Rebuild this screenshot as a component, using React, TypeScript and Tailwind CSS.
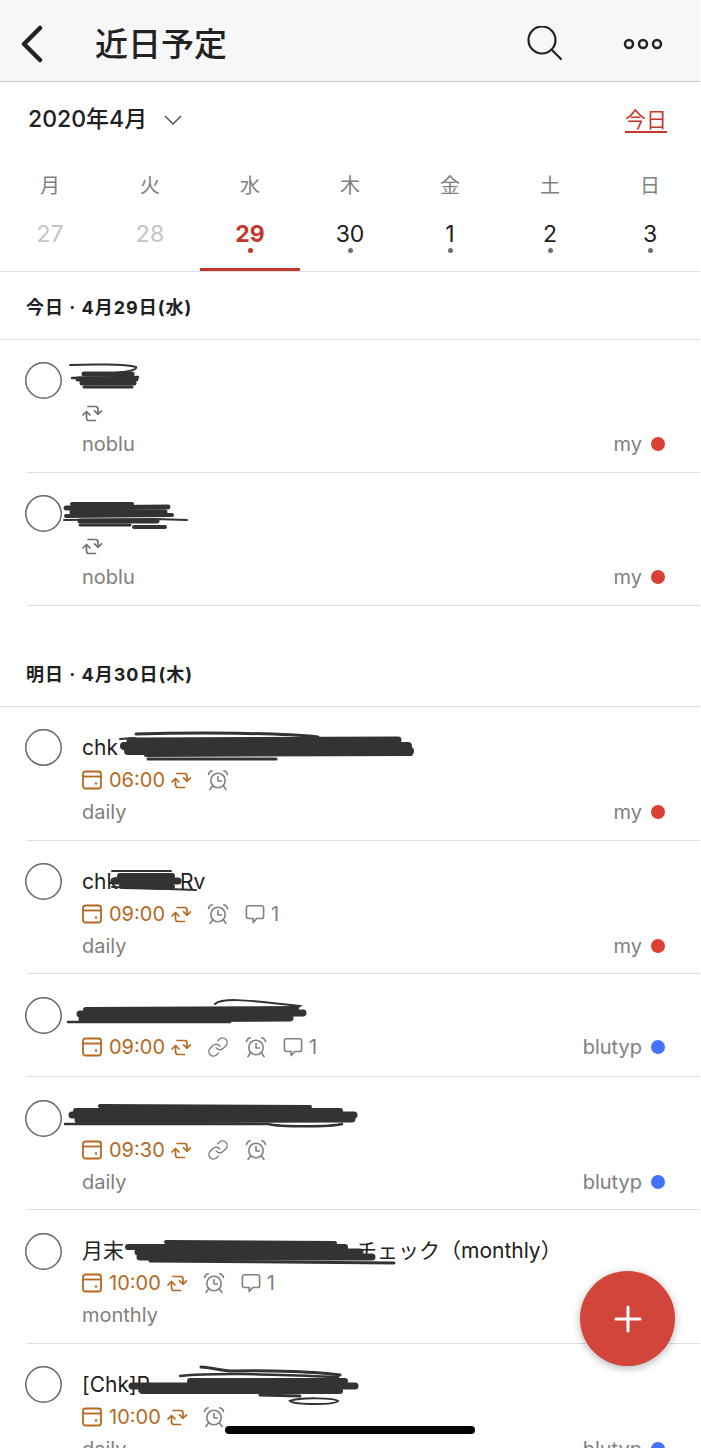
import { Link } from "lucide-react"

const fontStack = "font-['Inter','Noto_Sans_CJK_JP',sans-serif]"

function Calendar() {
  return (
    <svg width="20" height="20" viewBox="0 0 20 20" fill="none" stroke="#b5691f" strokeWidth="1.8" className="shrink-0">
      <rect x="1" y="1.5" width="18" height="17" rx="2.5" />
      <path d="M1 6.5h18" />
      <circle cx="14" cy="13.5" r="1.2" fill="#b5691f" stroke="none" />
    </svg>
  )
}

function Repeat({ color = "#b5691f" }: { color?: string }) {
  return (
    <svg width="20" height="18" viewBox="0 0 20 18" fill="none" stroke={color} strokeWidth="1.7" strokeLinecap="round" strokeLinejoin="round" className="shrink-0">
      <path d="M6 2.5H13.5C15 2.5 16 3.5 16 5V10" />
      <path d="M12.5 6.8L16 10.2L19.5 6.8" />
      <path d="M13.5 16.5H7C5.5 16.5 4.5 15.5 4.5 14V8" />
      <path d="M1 11L4.5 7.5L8 11" />
    </svg>
  )
}

function Alarm() {
  return (
    <svg width="22" height="22" viewBox="0 0 22 22" fill="none" stroke="#808080" strokeWidth="1.6" strokeLinecap="round" strokeLinejoin="round" className="shrink-0">
      <circle cx="11" cy="11.5" r="7.2" />
      <path d="M11 7.5V12H14.5" />
      <path d="M1.5 5.5C2 3.5 3.2 2.3 5.2 1.8" />
      <path d="M20.5 5.5C20 3.5 18.8 2.3 16.8 1.8" />
      <path d="M5.5 17L3 20.5" />
      <path d="M16.5 17L19 20.5" />
    </svg>
  )
}

function Comment() {
  return (
    <svg width="20" height="20" viewBox="0 0 20 20" fill="none" stroke="#808080" strokeWidth="1.6" strokeLinejoin="round" className="shrink-0">
      <path d="M3.5 1.8H16.5C17.7 1.8 18.6 2.7 18.6 3.9V12.4C18.6 13.6 17.7 14.5 16.5 14.5H11.6L8.2 18.6V14.5H3.5C2.3 14.5 1.4 13.6 1.4 12.4V3.9C1.4 2.7 2.3 1.8 3.5 1.8Z" />
    </svg>
  )
}

type Mark = { d: string; w: number }

function Scribble({ marks }: { marks: Mark[] }) {
  return (
    <svg className="pointer-events-none absolute top-0 left-[-27px] h-full w-[701px]" fill="none" stroke="#333333" strokeLinecap="round">
      {marks.map((m) => (
        <path key={m.d} d={m.d} strokeWidth={m.w} />
      ))}
    </svg>
  )
}

type Task = {
  title?: React.ReactNode
  time?: string
  repeatOnly?: boolean
  link?: boolean
  comments?: number
  section?: string
  project: string
  dot: "red" | "blue"
  sameLine?: boolean
  height: string
  circle: string
  marks: Mark[]
}

const todayTasks: Task[] = [
  {
    repeatOnly: true,
    section: "noblu",
    project: "my",
    dot: "red",
    height: "h-[133px]",
    circle: "mt-[22px]",
    marks: [
      { d: "M70 25C90 24 125 24 136 27C138 31 120 33 92 34", w: 2 },
      { d: "M84 34L132 34", w: 5 },
      { d: "M72 38L138 37", w: 2.5 },
      { d: "M78 39L136 39", w: 5 },
      { d: "M82 43L134 43", w: 5 },
      { d: "M84 47L132 47", w: 3 },
    ],
  },
  {
    repeatOnly: true,
    section: "noblu",
    project: "my",
    dot: "red",
    height: "h-[133px]",
    circle: "mt-[22px]",
    marks: [
      { d: "M72 31L132 31", w: 4 },
      { d: "M66 35L168 34", w: 5 },
      { d: "M72 39L165 39", w: 5 },
      { d: "M66 43L172 42", w: 4 },
      { d: "M64 47L155 46L187 47", w: 2 },
      { d: "M80 48L157 48", w: 5 },
      { d: "M80 52L130 52", w: 3 },
      { d: "M134 54L165 54", w: 4 },
    ],
  },
]

const tomorrowTasks: Task[] = [
  {
    title: "chk",
    time: "06:00",
    section: "daily",
    project: "my",
    dot: "red",
    height: "h-[134px]",
    circle: "mt-[22px]",
    marks: [
      { d: "M136 27C200 25 280 26 318 30", w: 3 },
      { d: "M120 32L135 31", w: 2 },
      { d: "M130 34L398 33", w: 7 },
      { d: "M124 39L408 39", w: 8 },
      { d: "M128 44L410 44", w: 8 },
      { d: "M146 48L411 47", w: 4 },
      { d: "M148 52L276 52", w: 3 },
    ],
  },
  {
    title: (
      <>
        chk<span className="ml-[62px]">Rv</span>
      </>
    ),
    time: "09:00",
    comments: 1,
    section: "daily",
    project: "my",
    dot: "red",
    height: "h-[133px]",
    circle: "mt-[22px]",
    marks: [
      { d: "M112 30L171 30", w: 2 },
      { d: "M120 35L172 35", w: 6 },
      { d: "M114 40L178 40", w: 7 },
      { d: "M122 45L172 46", w: 6 },
      { d: "M112 46L196 49", w: 2 },
    ],
  },
  {
    time: "09:00",
    link: true,
    comments: 1,
    project: "blutyp",
    dot: "blue",
    sameLine: true,
    height: "h-[103px]",
    circle: "mt-[23px]",
    marks: [
      { d: "M215 30C222 24 240 25 300 32C296 35 285 36 275 36", w: 2 },
      { d: "M86 36L296 35", w: 6 },
      { d: "M80 40L303 39", w: 7 },
      { d: "M82 45L290 44", w: 7 },
      { d: "M68 48L230 48", w: 2.5 },
    ],
  },
  {
    time: "09:30",
    link: true,
    section: "daily",
    project: "blutyp",
    dot: "blue",
    height: "h-[133px]",
    circle: "mt-[23px]",
    marks: [
      { d: "M100 29L310 30", w: 4 },
      { d: "M76 34L340 34", w: 6 },
      { d: "M72 38L354 38", w: 7 },
      { d: "M78 43L352 42", w: 7 },
      { d: "M65 47L268 47C280 50 330 50 342 47", w: 2.5 },
    ],
  },
  {
    title: (
      <>
        月末<span className="ml-[232px]">チェック（monthly）</span>
      </>
    ),
    time: "10:00",
    comments: 1,
    section: "monthly",
    project: "",
    dot: "red",
    height: "h-[134px]",
    circle: "mt-[23px]",
    marks: [
      { d: "M166 32L335 33", w: 4 },
      { d: "M128 37L345 37", w: 6 },
      { d: "M138 42L360 42", w: 7 },
      { d: "M140 47L372 47", w: 7 },
      { d: "M150 51L394 53", w: 3 },
    ],
  },
  {
    title: "[Chk]R",
    time: "10:00",
    section: "daily",
    project: "blutyp",
    dot: "blue",
    height: "h-[133px]",
    circle: "mt-[22px]",
    marks: [
      { d: "M201 23C210 23 215 26 230 27C270 26 320 28 340 31", w: 3 },
      { d: "M180 32C220 28 280 31 338 33", w: 2.5 },
      { d: "M190 37L345 37", w: 6 },
      { d: "M132 42L355 42", w: 7 },
      { d: "M142 47L340 47", w: 6 },
      { d: "M260 51L300 52", w: 3 },
      { d: "M290 57C300 53 335 54 338 57C335 61 295 61 290 57Z", w: 2 },
    ],
  },
]

function TaskRow({ task }: { task: Task }) {
  const right = task.project ? (
    <div className="flex items-center gap-[9px]">
      <span className="text-[#808080]">{task.project}</span>
      <span className={`h-[14px] w-[14px] rounded-full ${task.dot === "red" ? "bg-[#db4035]" : "bg-[#4073ff]"}`}></span>
    </div>
  ) : null

  return (
    <div className={`relative ml-[27px] box-border flex border-b border-[#dedede] ${task.height}`}>
      <svg width="37" height="37" viewBox="0 0 37 37" fill="none" stroke="#666666" strokeWidth="1.5" className={`-ml-[2px] shrink-0 ${task.circle}`}>
        <circle cx="18.5" cy="18.5" r="17.7" />
      </svg>
      <div className="ml-[20px] flex-1 pt-[25px] pr-[35px] text-[20px]">
        <div className="h-8 text-[21px] leading-8 whitespace-nowrap text-[#202020]">{task.title}</div>
        <div className={`flex items-center justify-between ${task.repeatOnly ? "h-[31px]" : "h-8"}`}>
          {task.repeatOnly ? (
            <Repeat color="#707070" />
          ) : (
            <>
              <div className="flex items-center">
                <Calendar />
                <span className="ml-[7px] text-[#b5691f]">{task.time}</span>
                <span className="ml-[6px]">
                  <Repeat />
                </span>
                {task.link && <Link size={22} color="#808080" strokeWidth={1.6} className="ml-[16px]" />}
                <span className="ml-[16px]">
                  <Alarm />
                </span>
                {task.comments ? (
                  <>
                    <span className="ml-[16px]">
                      <Comment />
                    </span>
                    <span className="ml-[6px] text-[#808080]">{task.comments}</span>
                  </>
                ) : null}
              </div>
              {task.sameLine && right}
            </>
          )}
        </div>
        {task.section && (
          <div className="flex h-8 items-center justify-between">
            <span className="text-[#808080]">{task.section}</span>
            {right}
          </div>
        )}
      </div>
      <Scribble marks={task.marks} />
    </div>
  )
}

const days = [
  { label: "月", date: "27", state: "past" },
  { label: "火", date: "28", state: "past" },
  { label: "水", date: "29", state: "today" },
  { label: "木", date: "30", state: "dot" },
  { label: "金", date: "1", state: "dot" },
  { label: "土", date: "2", state: "dot" },
  { label: "日", date: "3", state: "dot" },
]

function SectionHeader({ text, className = "" }: { text: string; className?: string }) {
  return (
    <div className={`box-border flex h-[68px] items-center border-b border-[#dedede] pt-[3px] pl-[26px] text-[18px] font-bold tracking-[1px] text-[#202020] ${className}`}>
      {text}
    </div>
  )
}

export default function App() {
  return (
    <div className={`relative h-[1448px] w-[701px] overflow-hidden bg-white ${fontStack}`}>
      <div className="w-[700px]">
        <header className="box-border flex h-[82px] items-center border-b border-[#c8c8c8] bg-[#f7f7f7] pt-[7px]">
          <svg width="26" height="38" viewBox="0 0 26 38" fill="none" stroke="#222222" strokeWidth="4.5" strokeLinecap="round" strokeLinejoin="round" className="ml-[20px]">
            <path d="M20 3L4 19L20 35" />
          </svg>
          <h1 className="mt-[1px] ml-[49px] flex-1 text-[33px] font-medium text-[#222222]">近日予定</h1>
          <svg width="36" height="36" viewBox="0 0 36 36" fill="none" stroke="#222222" strokeWidth="2.2" strokeLinecap="round" className="mr-[-2px]">
            <circle cx="15" cy="14" r="13.5" />
            <path d="M25 24L34 33" />
          </svg>
          <svg width="40" height="12" viewBox="0 0 40 12" fill="none" stroke="#222222" strokeWidth="2.5" className="mr-[37px] ml-[62px]">
            <circle cx="6" cy="6" r="4" />
            <circle cx="20" cy="6" r="4" />
            <circle cx="34" cy="6" r="4" />
          </svg>
        </header>

        <div className="flex h-[75px] items-center justify-between pr-[33px] pl-[28px]">
          <div className="flex items-center">
            <span className="text-[23px] font-medium text-[#202020]">2020年4月</span>
            <svg width="18" height="10" viewBox="0 0 18 10" fill="none" stroke="#555555" strokeWidth="1.5" className="ml-[17px]">
              <path d="M1 1L9 9L17 1" />
            </svg>
          </div>
          <span className="text-[21px] text-[#c8372d] underline underline-offset-4">今日</span>
        </div>

        <div className="box-border grid h-[115px] grid-cols-7 border-b border-[#dedede]">
          {days.map((d) => (
            <div key={d.label} className={`relative flex flex-col items-center pt-[14px] ${d.state === "today" ? "border-b-[3px] border-[#c0392b]" : ""}`}>
              <span className="h-[30px] text-[20px] leading-[30px] text-[#808080]">{d.label}</span>
              <span
                className={`mt-[16px] h-[31px] text-[23px] leading-[34px] ${
                  d.state === "past" ? "text-[#c4c4c4]" : d.state === "today" ? "font-bold text-[#c0392b]" : "text-[#202020]"
                }`}
              >
                {d.date}
              </span>
              {d.state !== "past" && (
                <span className={`h-[5px] w-[5px] rounded-full ${d.state === "today" ? "bg-[#c0392b]" : "bg-[#707070]"}`}></span>
              )}
            </div>
          ))}
        </div>

        <SectionHeader text="今日 · 4月29日(水)" />
        {todayTasks.map((t, i) => (
          <TaskRow key={i} task={t} />
        ))}

        <SectionHeader text="明日 · 4月30日(木)" className="mt-[33px]" />
        {tomorrowTasks.map((t, i) => (
          <TaskRow key={i} task={t} />
        ))}
      </div>

      <button className="absolute top-[1271px] left-[580px] flex h-[95px] w-[95px] items-center justify-center rounded-full bg-[#d1453b] shadow-[0_2px_8px_rgba(0,0,0,0.3)]">
        <svg width="28" height="28" viewBox="0 0 28 28" stroke="#ffffff" strokeWidth="3" strokeLinecap="round">
          <path d="M14 2V26M2 14H26" />
        </svg>
      </button>
      <div className="absolute top-[1426px] left-[225px] h-[8px] w-[250px] rounded-full bg-black"></div>
    </div>
  )
}
